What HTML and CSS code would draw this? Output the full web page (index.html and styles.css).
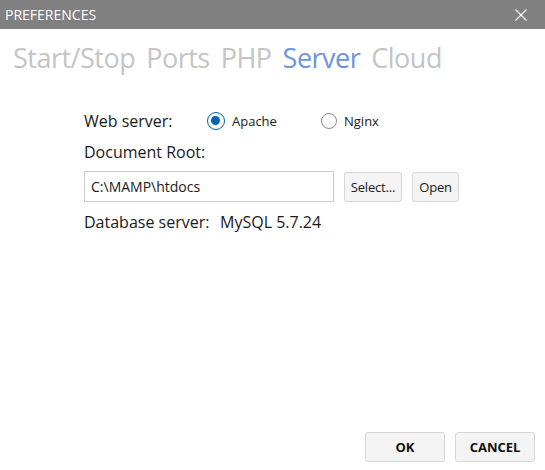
FILE: index.html
```html
<!DOCTYPE html>
<html>
<head>
<meta charset="utf-8">
<link rel="stylesheet" href="styles.css">
</head>
<body>
<div class="window">
  <div class="titlebar">
    <span class="title">PREFERENCES</span>
    <svg class="close" width="12" height="12" viewBox="0 0 12 12"><path d="M0.5 0.5 L11.5 11.5 M11.5 0.5 L0.5 11.5" stroke="#fff" stroke-width="1.1" fill="none"/></svg>
  </div>
  <div class="tabs">
    <span class="tab">Start/Stop</span>
    <span class="tab">Ports</span>
    <span class="tab">PHP</span>
    <span class="tab active">Server</span>
    <span class="tab">Cloud</span>
  </div>
  <div class="content">
    <div class="row">
      <span class="label lead">Web server:</span>
      <label class="radio checked"><span class="circle"></span><span class="rtext">Apache</span></label>
      <label class="radio"><span class="circle"></span><span class="rtext">Nginx</span></label>
    </div>
    <div class="row doc">
      <span class="label">Document Root:</span>
    </div>
    <div class="row inputrow">
      <div class="input">C:\MAMP\htdocs</div>
      <button class="btn small sel">Select...</button>
      <button class="btn small">Open</button>
    </div>
    <div class="row db">
      <span class="label dblabel">Database server:</span>
      <span class="label">MySQL 5.7.24</span>
    </div>
  </div>
  <div class="footer">
    <button class="btn big">OK</button>
    <button class="btn big">CANCEL</button>
  </div>
</div>
</body>
</html>
```
FILE: styles.css
```css
html, body {
  margin: 0;
  padding: 0;
  background: #ffffff;
}
body {
  font-family: "Open Sans", "Noto Sans", sans-serif;
  color: #1a1a1a;
}
.window {
  width: 545px;
  height: 470px;
  display: flex;
  flex-direction: column;
}
.titlebar {
  height: 29px;
  background: #808080;
  display: flex;
  align-items: center;
  justify-content: space-between;
  padding: 0 18px 0 5px;
  flex: none;
}
.title {
  color: #ffffff;
  font-size: 14px;
}
.close {
  display: block;
}
.tabs {
  display: flex;
  gap: 11px;
  padding: 9px 0 0 13px;
  height: 40px;
  align-items: center;
}
.tab {
  font-size: 27px;
  color: #c4c4c4;
  letter-spacing: -0.5px;
  line-height: 40px;
}
.tab.active {
  color: #6b95e0;
}
.content {
  padding: 31px 0 0 84px;
  display: flex;
  flex-direction: column;
}
.row {
  display: flex;
  align-items: center;
  height: 24px;
}
.label {
  font-size: 16px;
  color: #1a1a1a;
  white-space: nowrap;
  flex: none;
}
.label.lead {
  width: 123px;
}
.radio {
  display: flex;
  align-items: center;
  width: 114px;
}
.circle {
  width: 16px;
  height: 16px;
  border: 1px solid #8a8a8a;
  border-radius: 50%;
  box-sizing: border-box;
  position: relative;
  margin-right: 7px;
  background: #fff;
}
.radio.checked .circle {
  width: 18px;
  height: 18px;
  border: 1.5px solid #0063b1;
}
.radio.checked .circle::after {
  content: "";
  position: absolute;
  left: 3px;
  top: 3px;
  width: 9px;
  height: 9px;
  border-radius: 50%;
  background: #0063b1;
}
.rtext {
  font-size: 13px;
  color: #1a1a1a;
}
.row.doc {
  margin-top: 7px;
}
.row.inputrow {
  margin-top: 7px;
  height: 31px;
}
.input {
  width: 250px;
  height: 31px;
  box-sizing: border-box;
  border: 1px solid #cccccc;
  font-size: 14px;
  padding-left: 6px;
  line-height: 29px;
}
.btn {
  font-family: "Open Sans", "Noto Sans", sans-serif;
  background: #f4f4f4;
  border: 1px solid #d6d6d6;
  border-radius: 3px;
  color: #1a1a1a;
  padding: 0;
  box-sizing: border-box;
}
.btn.small {
  height: 30px;
  font-size: 13px;
  letter-spacing: -0.2px;
}
.btn.sel {
  width: 58px;
  margin-left: 10px;
}
.btn.small + .btn.small {
  width: 47px;
  margin-left: 10px;
}
.row.db {
  margin-top: 8px;
}
.label.dblabel {
  width: 136px;
}
.footer {
  margin-top: auto;
  display: flex;
  justify-content: flex-end;
  gap: 10px;
  padding: 0 10px 8px 0;
}
.btn.big {
  width: 80px;
  height: 30px;
  font-size: 13px;
  font-weight: 700;
  color: #111;
}
```
